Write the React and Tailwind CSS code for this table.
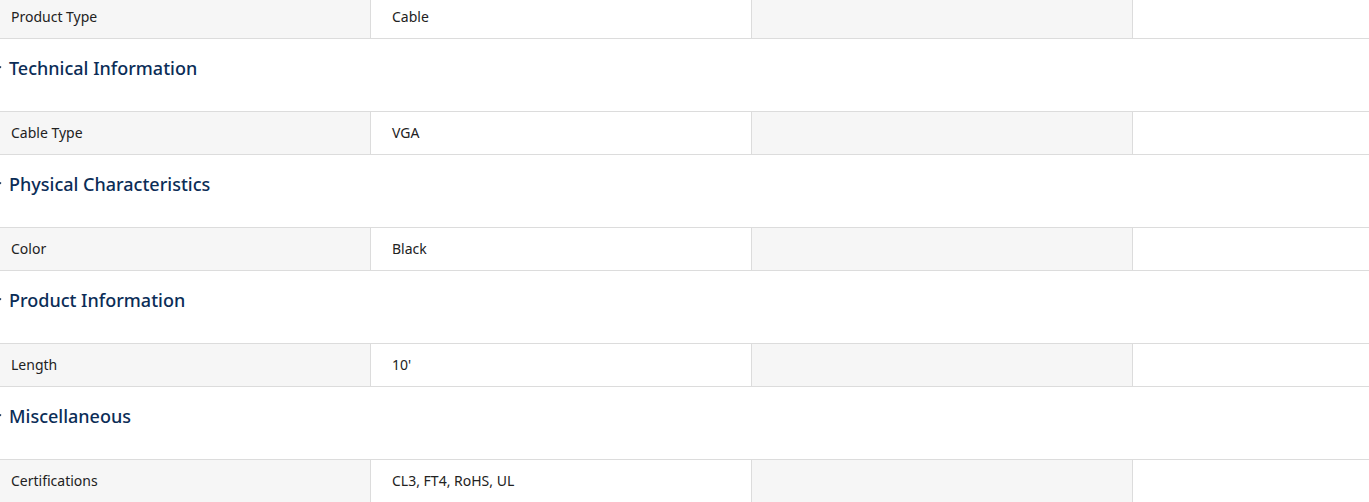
import React from "react";

const sections = [
  { title: null, label: "Product Type", value: "Cable" },
  { title: "Technical Information", label: "Cable Type", value: "VGA" },
  { title: "Physical Characteristics", label: "Color", value: "Black" },
  { title: "Product Information", label: "Length", value: "10'" },
  { title: "Miscellaneous", label: "Certifications", value: "CL3, FT4, RoHS, UL" },
];

function Row({ label, value }) {
  return (
    <div className="flex border-b border-[#dcdcdc] h-[43px]">
      <div className="w-[380px] shrink-0 bg-[#f6f6f6] border-r border-[#dcdcdc] flex items-center pl-[20px] pb-[2px] text-[14px] text-[#222]">
        {label}
      </div>
      <div className="w-[381px] shrink-0 bg-white border-r border-[#dcdcdc] flex items-center pl-[21px] pb-[2px] text-[14px] text-[#222]">
        {value}
      </div>
      <div className="w-[381px] shrink-0 bg-[#f6f6f6] border-r border-[#dcdcdc]"></div>
      <div className="w-[381px] shrink-0 bg-white"></div>
    </div>
  );
}

function Heading({ title }) {
  return (
    <div className="h-[73px] border-b border-[#dcdcdc] bg-white flex items-start pt-[17px]">
      <div className="flex items-center h-[24px]">
        <svg width="8" height="6" viewBox="0 0 8 6" className="ml-[3px]">
          <path d="M1 1.5 L4 4.5 L7 1.5" fill="none" stroke="#0b2d57" strokeWidth="1.4" />
        </svg>
        <span className="ml-[7px] text-[18px] leading-[24px] text-[#0b2d57] font-medium">{title}</span>
      </div>
    </div>
  );
}

export default function App() {
  return (
    <div className="w-[1369px] h-[502px] overflow-hidden bg-white" style={{ fontFamily: "'Noto Sans', 'Open Sans', sans-serif" }}>
      <div className="-mt-[4px] -ml-[9px] w-[1600px]">
        {sections.map((s, i) => (
          <React.Fragment key={i}>
            {s.title && <Heading title={s.title} />}
            <Row label={s.label} value={s.value} />
          </React.Fragment>
        ))}
      </div>
    </div>
  );
}
